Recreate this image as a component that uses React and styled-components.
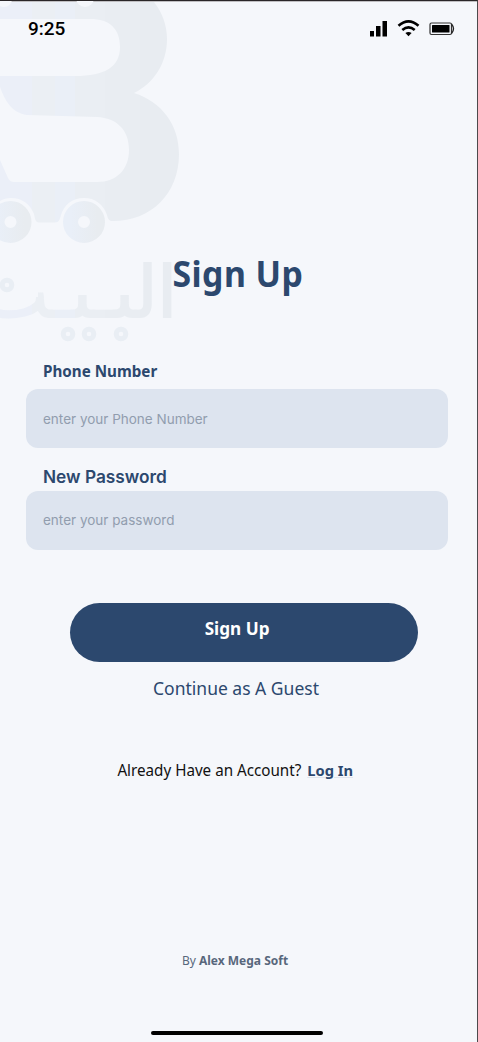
import React from 'react'
import styled, { createGlobalStyle } from 'styled-components';

const GlobalStyle = createGlobalStyle`
  * {
    box-sizing: border-box;
    margin: 0;
    padding: 0;
  }
  body {
    background: #f5f7fb;
  }
`;

const Screen = styled.main`
  position: relative;
  display: flex;
  flex-direction: column;
  width: 478px;
  height: 1042px;
  overflow: hidden;
  background: #f5f7fb;
  border-top: 1px solid #2a2628;
  border-right: 1px solid #4c4a4c;
  box-shadow: inset 0 1px 0 #c0bfc2;
  font-family: "Noto Sans", sans-serif;
  color: #2c486e;
`;

const Watermark = styled.svg`
  position: absolute;
  top: -1px;
  left: 0;
`;

const StatusBar = styled.header`
  position: relative;
  display: flex;
  justify-content: space-between;
  height: 60px;
  padding: 17px 22px 0 28px;
`;

const Time = styled.span`
  font: 500 19px/22px Roboto, sans-serif;
  color: #000;
`;

const Title = styled.h1`
  position: relative;
  margin-top: 186px;
  padding-right: 2px;
  height: 54px;
  line-height: 54px;
  font-size: 35px;
  font-weight: 700;
  letter-spacing: 0.5px;
  text-align: center;
`;

const Line = styled.span`
  display: inline-block;
  white-space: nowrap;
  transform: scaleX(${(props) => props.$stretch || 1});
`;

const Form = styled.form`
  display: flex;
  flex-direction: column;
  padding: 60px 29px 0 26px;
`;

const Label = styled.label`
  height: ${(props) => props.$height}px;
  padding-left: 17px;
  font-family: ${(props) => props.$font || 'inherit'};
  font-size: ${(props) => props.$size}px;
  font-weight: ${(props) => props.$weight};
  line-height: ${(props) => props.$line}px;
  span {
    transform-origin: left;
  }
`;

const Input = styled.input`
  width: 422px;
  height: 59px;
  margin-bottom: ${(props) => props.$gap}px;
  padding: 0 17px ${(props) => props.$lift || 0}px;
  border: none;
  border-radius: 12px;
  outline: none;
  background: #dde4ef;
  font: 400 13.5px Inter, sans-serif;
  color: #2c486e;
  &::placeholder {
    color: #919dae;
    opacity: 1;
  }
`;

const SubmitButton = styled.button`
  width: 348px;
  height: 59px;
  margin-left: 44px;
  padding: 0 14px 9px 0;
  border: none;
  border-radius: 30px;
  background: #2c486e;
  color: #fff;
  font: 700 17.5px "Noto Sans", sans-serif;
`;

const GuestLink = styled.a`
  margin-top: 12px;
  padding-right: 2px;
  line-height: 28px;
  font-size: 17.5px;
  text-align: center;
`;

const LoginText = styled.p`
  margin-top: 56px;
  padding-right: 6px;
  line-height: 24px;
  font-size: 15.5px;
  text-align: center;
  color: #111;
  b {
    margin-left: 2px;
    font-size: 15px;
    color: #2c486e;
    text-decoration: underline 1px #dfe5ee;
    text-underline-offset: 1px;
  }
`;

const Footer = styled.footer`
  margin-top: auto;
  display: flex;
  flex-direction: column;
  align-items: center;
  padding: 0 7px 7px 0;
  font-size: 12px;
  line-height: 20px;
  color: #58677c;
`;

const HomeIndicator = styled.div`
  width: 172px;
  height: 4px;
  margin: 60px 0 0 3px;
  border-radius: 2px;
  background: #000;
`;

const dots = [[7, 285], [68, 334], [89, 334], [121, 334]];

const Logo = () => (
  <Watermark width="200" height="350" viewBox="0 0 200 350" aria-hidden="true">
    <defs>
      <linearGradient id="bands" gradientUnits="userSpaceOnUse" x1="0" y1="0" x2="180" y2="0">
        <stop offset="0" stopColor="#ebeff8" />
        <stop offset=".178" stopColor="#ebeff8" />
        <stop offset=".178" stopColor="#ebeff4" />
        <stop offset=".305" stopColor="#ebeff4" />
        <stop offset=".305" stopColor="#eaeff7" />
        <stop offset=".415" stopColor="#eaeff7" />
        <stop offset=".415" stopColor="#eaeef3" />
        <stop offset=".583" stopColor="#eaeef3" />
        <stop offset=".583" stopColor="#e9edf2" />
        <stop offset=".777" stopColor="#e9edf2" />
        <stop offset=".777" stopColor="#e8ecf1" />
      </linearGradient>
      <linearGradient id="wheel">
        <stop offset="0" stopColor="#e9eff8" />
        <stop offset="1" stopColor="#e8ecf0" />
      </linearGradient>
    </defs>
    <path
      fill="url(#bands)"
      fillRule="evenodd"
      d="M0 2H154C162 12 167 25 167 39C167 64 153 84 134 93C162 102 179 125 179 154C179 194 151 221 113 221C109 221 108 219 107 215C103 204 95 198 84 198C72 198 64 205 61 215C60 219 59 222.500 55 222.500H39C35 222.500 35 218 34 214C30 204 22 198 11 198C7 198 3 199 0 201V160L8 178Q10 182 14 182H97C117 182 129 169 129 150C129 130 117 118 97 117L27 115C12 113 5 101 0 87V76H75C105 76 120 67 120 47C120 29 110 19 90 19H0Z"
    />
    <circle cx="4" cy="-1" r="8" fill="#f5f7fb" />
    <circle cx="85" cy="-2" r="9" fill="#f5f7fb" />
    {[10.5, 84].map((cx) => (
      <circle key={cx} cx={cx} cy="222" r="13.500" fill="none" stroke="url(#wheel)" strokeWidth="15" />
    ))}
    <text
      x="177"
      y="317"
      direction="rtl"
      fontFamily="DejaVu Sans, sans-serif"
      fontSize="71"
      fill="url(#bands)"
      stroke="url(#bands)"
      strokeWidth="2"
    >
      البـيـت
    </text>
    {/* the wordmark has rings where the font has dots */}
    <path d="M50 320H138V345H50ZM0 274H38V297H0Z" fill="#f5f7fb" />
    {dots.map(([cx, cy]) => (
      <circle key={cx} cx={cx} cy={cy} r="4.800" fill="none" stroke="#e9eef4" strokeWidth="5" />
    ))}
  </Watermark>
);

const StatusIcons = () => (
  <svg width="86" height="22" viewBox="0 0 86 22">
    <path d="M1 13h4v5.500h-4zM7 8h4.500v10.500h-4.500zM13.500 3h4.500v15.500h-4.500z" />
    <path
      fill="none"
      stroke="#000"
      strokeWidth="2.600"
      d="M29.500 7.800Q39.500-1.200 49.500 7.800M33.300 12.100Q39.500 6.700 45.700 12.100"
    />
    <path d="M36.400 14.900Q39.500 12.900 42.600 14.900L39.500 18.300Z" />
    <rect x="61" y="5" width="21.500" height="11.500" rx="1.500" fill="none" stroke="#333" strokeWidth="1.200" />
    <rect x="63" y="7" width="17.500" height="7.500" rx=".5" />
    <path d="M82.500 6Q86.500 10.800 82.500 15.500" fill="none" stroke="#222" strokeWidth="1.300" />
  </svg>
);

const App = () => {
  return (
    <>
      <GlobalStyle />
      <Screen>
        <Logo />
        <StatusBar>
          <Time>9:25</Time>
          <StatusIcons />
        </StatusBar>
        <Title><Line $stretch={0.965}>Sign Up</Line></Title>
        <Form>
          <Label htmlFor="phone" $size={15.5} $weight={700} $height={28} $line={21}>
            <Line $stretch={0.98}>Phone Number</Line>
          </Label>
          <Input id="phone" placeholder="enter your Phone Number" $gap={17} />
          <Label htmlFor="password" $font="Inter, sans-serif" $size={17.3} $weight={600} $height={26} $line={24}>
            <Line>New Password</Line>
          </Label>
          <Input id="password" type="password" placeholder="enter your password" $gap={53} $lift={2} />
          <SubmitButton type="button"><Line $stretch={0.98}>Sign Up</Line></SubmitButton>
          <GuestLink><Line>Continue as A Guest</Line></GuestLink>
        </Form>
        <LoginText>
          <Line $stretch={0.98}>Already Have an Account? <b>Log In</b></Line>
        </LoginText>
        <Footer>
          <Line>By <b>Alex Mega Soft</b></Line>
          <HomeIndicator />
        </Footer>
      </Screen>
    </>
  );
}

export default App
